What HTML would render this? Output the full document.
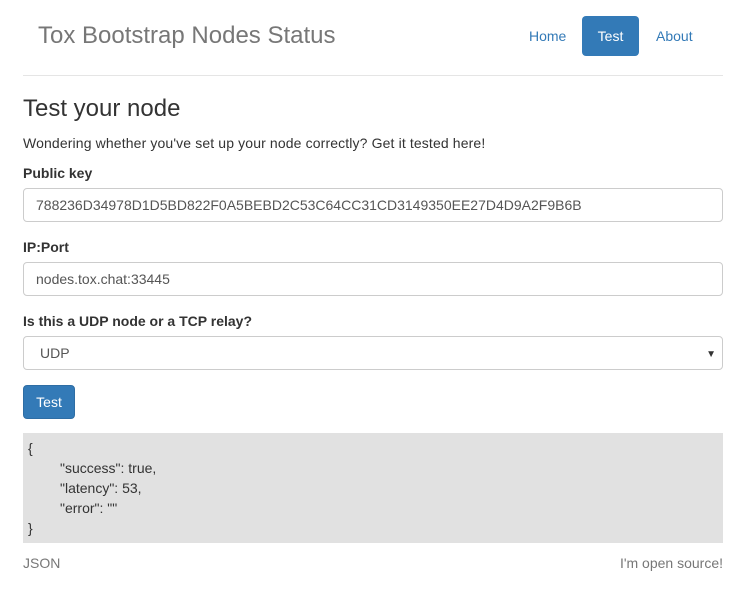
<!DOCTYPE html>
<html><head><style>
*{box-sizing:border-box;margin:0;padding:0}
body{width:748px;height:605px;background:#fff;font-family:"Liberation Sans",sans-serif;font-size:14px;color:#333;position:relative;overflow:hidden}
.a{position:absolute;white-space:nowrap}
.inp{position:absolute;left:23px;width:700px;height:34px;border:1px solid #ccc;border-radius:4px;padding:0 12px;line-height:32px;color:#555;font-size:14px}
label{font-weight:bold}
</style></head><body>
<div class="a" style="left:38px;top:22px;font-size:24px;color:#777;line-height:28px">Tox Bootstrap Nodes Status</div>
<div class="a" style="left:529px;top:28px;color:#337ab7;line-height:17px">Home</div>
<div class="a" style="left:582px;top:16px;width:57px;height:40px;background:#337ab7;border-radius:4px;color:#fff;text-align:center;line-height:40px">Test</div>
<div class="a" style="left:656px;top:28px;color:#337ab7;line-height:17px">About</div>
<div class="a" style="left:23px;top:75px;width:700px;height:1px;background:#e5e5e5"></div>
<div class="a" style="left:23px;top:95px;font-size:24px;line-height:28px">Test your node</div>
<div class="a" style="left:23px;top:135px;line-height:17px;letter-spacing:0.13px">Wondering whether you've set up your node correctly? Get it tested here!</div>
<label class="a" style="left:23px;top:165px;line-height:17px">Public key</label>
<div class="inp" style="top:188px">788236D34978D1D5BD822F0A5BEBD2C53C64CC31CD3149350EE27D4D9A2F9B6B</div>
<label class="a" style="left:23px;top:239px;line-height:17px">IP:Port</label>
<div class="inp" style="top:262px">nodes.tox.chat:33445</div>
<label class="a" style="left:23px;top:313px;line-height:17px">Is this a UDP node or a TCP relay?</label>
<div class="inp" style="top:336px;padding-left:16px;color:#555">UDP<span style="position:absolute;right:6px;top:2px;font-size:10px;color:#333">▼</span></div>
<div class="a" style="left:23px;top:385px;width:52px;height:34px;background:#337ab7;border:1px solid #2e6da4;border-radius:4px;color:#fff;text-align:center;line-height:32px">Test</div>
<div class="a" style="left:23px;top:433px;width:700px;height:110px;background:#e1e1e1;padding:5px 0 0 5px;line-height:20px;color:#333">
<div>{</div><div style="padding-left:32px">"success": true,</div><div style="padding-left:32px">"latency": 53,</div><div style="padding-left:32px">"error": ""</div><div>}</div></div>
<div class="a" style="left:23px;top:555px;color:#777;line-height:17px">JSON</div>
<div class="a" style="right:25px;top:555px;color:#777;line-height:17px">I'm open source!</div>
</body></html>
